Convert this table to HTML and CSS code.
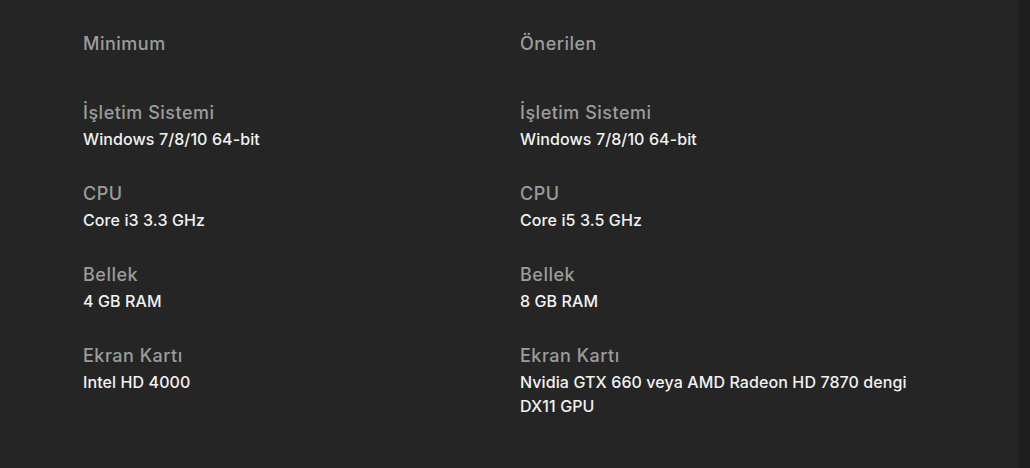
FILE: index.html
```html
<!DOCTYPE html>
<html lang="tr">
<head>
<meta charset="utf-8">
<link rel="stylesheet" href="styles.css">
</head>
<body>
<div class="page">
  <div class="specs">
    <section class="col">
      <h3 class="col-title">Minimum</h3>
      <dl class="list">
        <div class="item"><dt>İşletim Sistemi</dt><dd>Windows 7/8/10 64-bit</dd></div>
        <div class="item"><dt>CPU</dt><dd>Core i3 3.3 GHz</dd></div>
        <div class="item"><dt>Bellek</dt><dd>4 GB RAM</dd></div>
        <div class="item"><dt>Ekran Kartı</dt><dd>Intel HD 4000</dd></div>
      </dl>
    </section>
    <section class="col">
      <h3 class="col-title">Önerilen</h3>
      <dl class="list">
        <div class="item"><dt>İşletim Sistemi</dt><dd>Windows 7/8/10 64-bit</dd></div>
        <div class="item"><dt>CPU</dt><dd>Core i5 3.5 GHz</dd></div>
        <div class="item"><dt>Bellek</dt><dd>8 GB RAM</dd></div>
        <div class="item"><dt>Ekran Kartı</dt><dd>Nvidia GTX 660 veya AMD Radeon HD 7870 dengi DX11 GPU</dd></div>
      </dl>
    </section>
  </div>
  <div class="scroll-track"></div>
</div>
</body>
</html>
```
FILE: styles.css
```css
* { box-sizing: border-box; }
html, body { margin: 0; padding: 0; height: 100%; }
body {
  background: #252525;
  font-family: Inter, "Noto Sans", sans-serif;
  overflow: hidden;
}
.page {
  display: flex;
  height: 468px;
}
.specs {
  flex: 1;
  display: flex;
  padding: 32px 0 0 83px;
}
.col {
  width: 437px;
}
.col:last-child { width: 410px; }
.col-title {
  margin: 0;
  font-size: 18px;
  font-weight: 500;
  line-height: 24px;
  color: #9c9c9c;
  letter-spacing: 0.5px;
}
.list {
  margin: 45px 0 0;
  display: flex;
  flex-direction: column;
  gap: 31px;
}
.item dt {
  font-size: 18px;
  font-weight: 500;
  line-height: 24px;
  color: #9c9c9c;
  letter-spacing: 0.5px;
}
.item dd {
  margin: 2px 0 0;
  font-size: 16px;
  line-height: 24px;
  color: #f2f2f2;
  font-weight: 500;
  letter-spacing: 0.1px;
}
.scroll-track {
  width: 12px;
  background: #1f1f1f;
}
```
